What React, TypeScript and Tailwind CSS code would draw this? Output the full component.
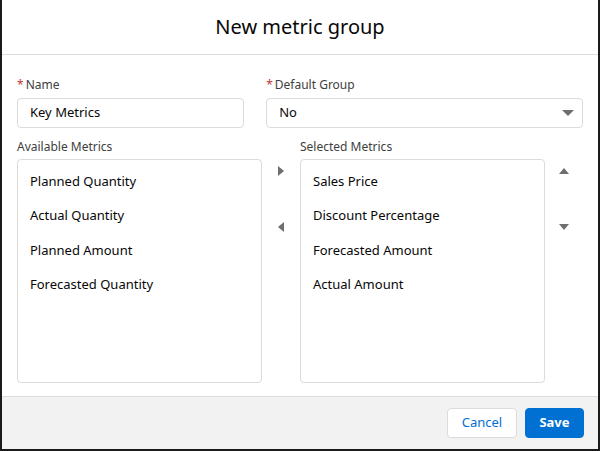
const available = ["Planned Quantity", "Actual Quantity", "Planned Amount", "Forecasted Quantity"];
const selected = ["Sales Price", "Discount Percentage", "Forecasted Amount", "Actual Amount"];

function Tri({ dir }: { dir: "up" | "down" | "left" | "right" }) {
  const pts = {
    up: "0,8 5,2 10,8",
    down: "0,2 10,2 5,8",
    left: "8,0 8,10 2,5",
    right: "2,0 2,10 8,5",
  }[dir];
  return (
    <svg width="10" height="10" viewBox="0 0 10 10">
      <polygon points={pts} fill="#706e6b" />
    </svg>
  );
}

function List({ items }: { items: string[] }) {
  return (
    <div className="h-[224px] rounded border border-[#dddbda] bg-white pt-[4px]">
      {items.map((t) => (
        <div key={t} className="flex h-[34.5px] items-center px-3 text-[13px] text-[#080707]">
          {t}
        </div>
      ))}
    </div>
  );
}

export default function App() {
  return (
    <div className="h-[451px] w-[600px] border-x-2 border-b-2 border-[#1a1a1a] bg-white font-['Liberation_Sans',Arial,sans-serif] flex flex-col">
      <div className="flex h-[55px] items-center justify-center border-b border-[#dddbda] text-[20px] text-[#080707]">
        New metric group
      </div>
      <div className="flex-1 px-[15px] pt-[21px]">
        <div className="flex gap-[22px]">
          <div className="w-[228px]">
            <div className="mb-[4px] text-[12px] text-[#3e3e3c]"><span className="mr-[2px] text-[#c23934]">*</span>Name</div>
            <div className="flex h-[30px] items-center rounded border border-[#dddbda] px-3 text-[13px] text-[#080707]">Key Metrics</div>
          </div>
          <div className="w-[318px]">
            <div className="mb-[4px] text-[12px] text-[#3e3e3c]"><span className="mr-[2px] text-[#c23934]">*</span>Default Group</div>
            <div className="flex h-[30px] items-center justify-between rounded border border-[#dddbda] pl-3 pr-2 text-[13px] text-[#080707]">
              No
              <svg width="12" height="8" viewBox="0 0 12 8"><polygon points="0,1 12,1 6,7" fill="#706e6b" /></svg>
            </div>
          </div>
        </div>
        <div className="mt-[10px] flex">
          <div className="w-[246px]">
            <div className="mb-[3px] text-[12px] text-[#3e3e3c]">Available Metrics</div>
            <List items={available} />
          </div>
          <div className="flex w-[38px] flex-col items-center gap-[46px] pt-[28px]">
            <Tri dir="right" />
            <Tri dir="left" />
          </div>
          <div className="w-[246px]">
            <div className="mb-[3px] text-[12px] text-[#3e3e3c]">Selected Metrics</div>
            <List items={selected} />
          </div>
          <div className="flex w-[38px] flex-col items-center gap-[46px] pt-[28px]">
            <Tri dir="up" />
            <Tri dir="down" />
          </div>
        </div>
      </div>
      <div className="flex h-[53px] items-center justify-end gap-2 border-t border-[#dddbda] bg-[#f3f2f2] pr-[14px]">
        <button className="h-[30px] w-[70px] rounded border border-[#dddbda] bg-white text-[13px] text-[#0070d2]">Cancel</button>
        <button className="h-[30px] w-[59px] rounded border border-[#0070d2] bg-[#0070d2] text-[13px] font-bold text-white">Save</button>
      </div>
    </div>
  );
}
